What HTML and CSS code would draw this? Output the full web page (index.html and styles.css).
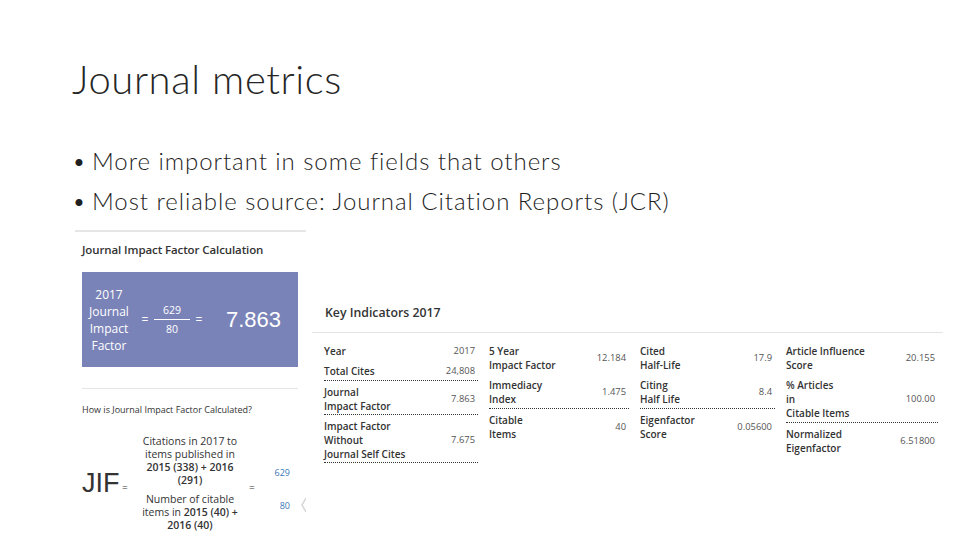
FILE: index.html
```html
<!DOCTYPE html>
<html lang="en">
<head>
    <meta charset="UTF-8">
    <title>Journal metrics</title>
    <link rel="stylesheet" href="styles.css">
</head>
<body>
    <div class="slide">
        <h1>Journal metrics</h1>
        <ul class="bullets">
            <li>More important in some fields that others</li>
            <li>Most reliable source: Journal Citation Reports (JCR)</li>
        </ul>

        <div class="shots">
            <!-- Left screenshot: calculation -->
            <div class="calc">
                <h2>Journal Impact Factor Calculation</h2>
                <div class="calc-box">
                    <div class="calc-label"><div>2017</div><div>Journal</div><div>Impact</div><div>Factor</div></div>
                    <span class="eq">=</span>
                    <div class="frac"><span class="frac-top">629</span><span>80</span></div>
                    <span class="eq">=</span>
                    <div class="calc-result">7.863</div>
                </div>
                <p class="how">How is Journal Impact Factor Calculated?</p>
                <div class="jif">
                    <span class="jif-name">JIF</span>
                    <span class="eq-dark">=</span>
                    <div class="jif-frac">
                        <div>Citations in 2017 to items published in <b>2015 (338) + 2016 (291)</b></div>
                        <div>Number of citable items in <b>2015 (40) + 2016 (40)</b></div>
                    </div>
                    <span class="eq-dark">=</span>
                    <div class="jif-links"><span>629</span><span>80</span></div>
                    <svg class="chevron" width="5" height="16" viewBox="0 0 5 16"><path d="M5 1 L1 8 L5 15" fill="none" stroke="#d5d5d5" stroke-width="1.5"/></svg>
                </div>
            </div>

            <!-- Right screenshot: key indicators -->
            <div class="key">
                <h2>Key Indicators 2017</h2>
                <div class="key-grid">
                    <div class="key-col col-a">
                        <div class="row"><b>Year</b><span>2017</span></div>
                        <div class="row dotted"><b>Total Cites</b><span>24,808</span></div>
                        <div class="row dotted"><b>Journal<br>Impact Factor</b><span>7.863</span></div>
                        <div class="row dotted"><b>Impact Factor<br>Without<br>Journal Self Cites</b><span>7.675</span></div>
                    </div>
                    <div class="key-col col-b">
                        <div class="row"><b>5 Year<br>Impact Factor</b><span>12.184</span></div>
                        <div class="row dotted"><b>Immediacy<br>Index</b><span>1.475</span></div>
                        <div class="row"><b>Citable<br>Items</b><span>40</span></div>
                    </div>
                    <div class="key-col col-c">
                        <div class="row"><b>Cited<br>Half-Life</b><span>17.9</span></div>
                        <div class="row dotted"><b>Citing<br>Half Life</b><span>8.4</span></div>
                        <div class="row"><b>Eigenfactor<br>Score</b><span>0.05600</span></div>
                    </div>
                    <div class="key-col col-d">
                        <div class="row"><b>Article Influence<br>Score</b><span>20.155</span></div>
                        <div class="row dotted"><b>% Articles<br>in<br>Citable Items</b><span>100.00</span></div>
                        <div class="row"><b>Normalized<br>Eigenfactor</b><span>6.51800</span></div>
                    </div>
                </div>
            </div>
        </div>
    </div>
</body>
</html>
```

FILE: styles.css
```css
/* General Styles */
body {
    margin: 0;
    padding: 0;
    background-color: #fff;
    font-family: 'Lato', 'Open Sans', sans-serif;
}

.slide {
    width: 960px;
    height: 540px;
    overflow: hidden;
    box-sizing: border-box;
    padding: 55px 0 0 72px;
}

h1 {
    margin: 0;
    font-size: 40px;
    line-height: 48px;
    font-weight: 300;
    letter-spacing: 0.6px;
    color: #262626;
}

.bullets {
    list-style: none;
    margin: 38px 0 0;
    padding: 0;
    font-size: 24px;
    line-height: 40px;
    font-weight: 300;
    letter-spacing: 0.95px;
    color: #1f1f1f;
}

.bullets li::before {
    content: "•";
    display: inline-block;
    width: 20px;
}

.shots {
    display: flex;
    margin: 9px 0 0 3px;
}

/* Left screenshot */
.calc {
    width: 231px;
    flex: none;
    border-top: 2px solid #e6e6e6;
    font-family: 'Open Sans', sans-serif;
    color: #333;
}

.calc h2 {
    margin: 11px 0 0 7px;
    font-size: 11.5px;
    line-height: 14px;
    font-weight: 600;
    letter-spacing: -0.1px;
}

.calc-box {
    display: flex;
    align-items: center;
    width: 216px;
    height: 95px;
    margin: 15px 0 0 7px;
    background-color: #7a83b8;
    color: #fff;
    font-size: 12px;
}

.calc-label {
    width: 54px;
    text-align: center;
    line-height: 17px;
}

.eq {
    width: 8px;
    margin: 0 5px;
    text-align: center;
}

.frac {
    display: flex;
    flex-direction: column;
    align-items: center;
    width: 36px;
    font-size: 10.5px;
    line-height: 18px;
}

.frac-top {
    width: 100%;
    text-align: center;
    border-bottom: 1px solid #fff;
}

.calc-result {
    margin-left: 18px;
    font-family: 'Liberation Sans', sans-serif;
    font-size: 22px;
}

.how {
    margin: 21px 0 0 7px;
    padding-top: 14px;
    width: 216px;
    border-top: 1px solid #e6e6e6;
    font-size: 9px;
    line-height: 14px;
}

.jif {
    display: flex;
    align-items: center;
    width: 240px;
    margin: 18px 0 0 7px;
}

.jif-name {
    width: 38px;
    font-family: 'Liberation Sans', sans-serif;
    font-size: 27px;
}

.eq-dark {
    width: 8px;
    margin: 6px 0 0 2px;
    font-size: 10px;
}

.jif-frac {
    width: 100px;
    margin: 0 7px 0 10px;
    text-align: center;
    font-size: 10.5px;
    line-height: 13px;
}

.jif-frac div + div {
    margin-top: 6px;
}

.jif-frac b {
    font-weight: 600;
}

.jif-links {
    display: flex;
    flex-direction: column;
    align-items: flex-end;
    gap: 20px;
    width: 33px;
    margin-top: 10px;
    font-size: 9px;
    color: #3b78b8;
}

.chevron {
    margin: 42px 0 0 11px;
}

/* Right screenshot */
.key {
    flex: 1;
    min-width: 0;
    margin: 72px 17px 0 6px;
    font-family: 'Open Sans', sans-serif;
    color: #333;
}

.key h2 {
    margin: 0;
    padding: 2px 0 11px 13px;
    font-size: 12.3px;
    line-height: 17px;
    font-weight: 600;
    border-bottom: 1px solid #e4e4e4;
}

.key-grid {
    display: flex;
    margin: 11px 0 0 12px;
}

.key-col {
    flex: none;
    font-size: 10px;
    line-height: 14px;
}

.col-a { width: 154px; margin-right: 11px; }
.col-b { width: 140px; margin-right: 11px; }
.col-c { width: 135px; margin-right: 11px; }
.col-d { width: 152px; }

.row {
    display: flex;
    justify-content: space-between;
    align-items: center;
    padding: 0 3px 6px 0;
}

.row b {
    font-weight: 600;
}

.row span {
    font-size: 9.4px;
    color: #555;
}

.dotted {
    border-bottom: 1px dotted #333;
    padding-bottom: 2px;
    margin-bottom: 4px;
}

.col-a .dotted + .dotted {
    padding-bottom: 1px;
}
```
